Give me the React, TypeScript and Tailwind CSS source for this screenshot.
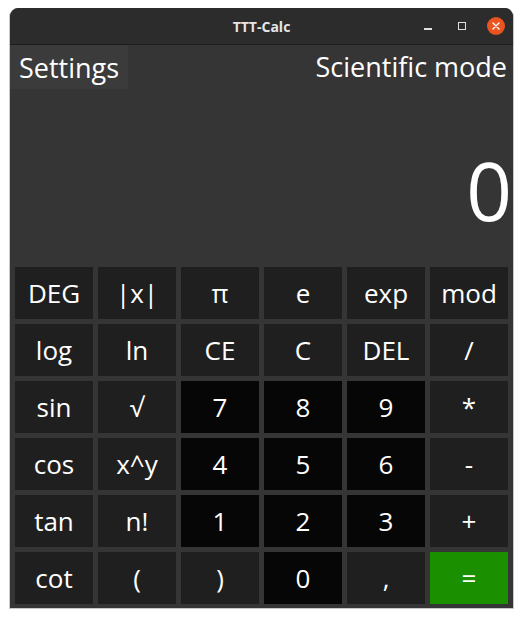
import React from "react";

const ROWS: { label: string; kind: "fn" | "num" | "eq" }[][] = [
  [
    { label: "DEG", kind: "fn" },
    { label: "|x|", kind: "fn" },
    { label: "π", kind: "fn" },
    { label: "e", kind: "fn" },
    { label: "exp", kind: "fn" },
    { label: "mod", kind: "fn" },
  ],
  [
    { label: "log", kind: "fn" },
    { label: "ln", kind: "fn" },
    { label: "CE", kind: "fn" },
    { label: "C", kind: "fn" },
    { label: "DEL", kind: "fn" },
    { label: "/", kind: "fn" },
  ],
  [
    { label: "sin", kind: "fn" },
    { label: "√", kind: "fn" },
    { label: "7", kind: "num" },
    { label: "8", kind: "num" },
    { label: "9", kind: "num" },
    { label: "*", kind: "fn" },
  ],
  [
    { label: "cos", kind: "fn" },
    { label: "x^y", kind: "fn" },
    { label: "4", kind: "num" },
    { label: "5", kind: "num" },
    { label: "6", kind: "num" },
    { label: "-", kind: "fn" },
  ],
  [
    { label: "tan", kind: "fn" },
    { label: "n!", kind: "fn" },
    { label: "1", kind: "num" },
    { label: "2", kind: "num" },
    { label: "3", kind: "num" },
    { label: "+", kind: "fn" },
  ],
  [
    { label: "cot", kind: "fn" },
    { label: "(", kind: "fn" },
    { label: ")", kind: "fn" },
    { label: "0", kind: "num" },
    { label: ",", kind: "fn" },
    { label: "=", kind: "eq" },
  ],
];

const BG = {
  fn: "bg-[#1f1f1f]",
  num: "bg-[#060606]",
  eq: "bg-[#1a8f00]",
};

export default function App() {
  return (
    <div className="w-[523px] h-[619px] bg-white pt-[8px] pl-[9px] font-['Open_Sans',sans-serif]">
      <div className="w-[505px] h-[601px] rounded-t-[9px] border-x border-b border-[#c8c8c8] border-t-0 bg-[#353535] overflow-hidden flex flex-col">
        {/* title bar */}
        <div className="h-[37px] shrink-0 bg-[#2c2c2c] border-b border-[#1d1d1d] flex items-center relative">
          <span className="absolute left-0 right-0 text-center text-[14px] font-bold text-[#e6e6e6]">
            TTT-Calc
          </span>
          <div className="ml-auto flex items-center mr-[8px]">
            <span className="w-[8px] h-[1.5px] bg-[#e0e0e0] mt-[6px] mr-[26px]" />
            <span className="w-[8px] h-[8px] border border-[#e0e0e0] mr-[21px]" />
            <span className="w-[18px] h-[18px] rounded-full bg-[#e95420] flex items-center justify-center">
              <svg width="8" height="8" viewBox="0 0 8 8">
                <path d="M1 1L7 7M7 1L1 7" stroke="#fff" strokeWidth="1.4" strokeLinecap="round" />
              </svg>
            </span>
          </div>
        </div>

        {/* header */}
        <div className="h-[44px] shrink-0 flex items-center justify-between text-white text-[27px]">
          <button className="h-full px-[9px] bg-[#3b3b3b] leading-none">Settings</button>
          <span className="pr-[6px]">Scientific mode</span>
        </div>

        {/* display */}
        <div className="h-[173px] shrink-0 flex items-end justify-end pr-[1px] pb-[32px]">
          <span className="text-white text-[80px] leading-none">0</span>
        </div>

        {/* keypad */}
        <div className="px-[5px] pt-[5px] grid grid-cols-6 gap-[5px]">
          {ROWS.flat().map((b, i) => (
            <button
              key={i}
              className={`h-[52px] ${BG[b.kind]} text-white text-[26px] leading-none flex items-center justify-center`}
            >
              {b.label}
            </button>
          ))}
        </div>
      </div>
    </div>
  );
}
